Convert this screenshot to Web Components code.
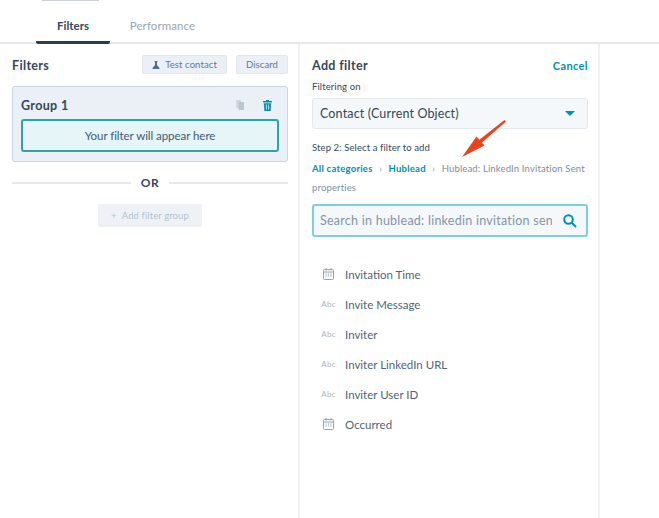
<!DOCTYPE html>
<html>
<head>
<meta charset="utf-8">
<style>
  html, body { margin: 0; height: 100%; background: #fff; }
  body { font-family: Lato, "Open Sans", sans-serif; color: #33475b; overflow: hidden; }
</style>
</head>
<body>
<filter-page></filter-page>
<script>
class TabBar extends HTMLElement {
  constructor() {
    super();
    this.attachShadow({ mode: 'open' });
    this.shadowRoot.innerHTML = `
      <style>
        :host { display: block; height: 44px; box-sizing: border-box; border-bottom: 2px solid #e5e9ee; padding-left: 36px; }
        #top { position: absolute; left: 42px; top: 0; width: 57px; height: 1px; background: #c9d1db; }
        #tabs { display: flex; height: 44px; }
        .tab { display: flex; align-items: center; justify-content: center; height: 44px; box-sizing: border-box; font-size: 11.5px; padding-top: 9px; }
        .on { width: 74px; font-weight: 700; color: #33475b; border-bottom: 3px solid #2d3e50; border-radius: 0 0 2px 2px; }
        .off { width: 105px; color: #99a6b5; letter-spacing: .1px; padding-bottom: 3px; }
      </style>
      <div id="top"></div>
      <div id="tabs"><div class="tab on">Filters</div><div class="tab off">Performance</div></div>
    `;
  }
}

class FlatButton extends HTMLElement {
  constructor() {
    super();
    this.attachShadow({ mode: 'open' });
    this.shadowRoot.innerHTML = `
      <style>
        :host { display: inline-flex; align-items: center; justify-content: center; gap: 5px; height: 19px; box-sizing: border-box; padding: 0 9px; background: #eaf0f6; border: 1px solid #e1e7ee; border-radius: 2px; font-size: 9.5px; color: #5e7a96; letter-spacing: .1px; }
        :host([disabled]) { color: #b6c2cf; height: 23px; padding: 0 12px; background: #eef2f6; border-color: #eef2f6; }
      </style>
      <slot name="icon"></slot><slot></slot>
    `;
  }
}

class FilterGroup extends HTMLElement {
  constructor() {
    super();
    this.attachShadow({ mode: 'open' });
    this.shadowRoot.innerHTML = `
      <style>
        :host { display: block; background: #eaf0f6; border: 1px solid #cbd6e2; border-radius: 3px; padding: 6px 8px 9px; box-sizing: border-box; height: 76px; }
        #head { display: flex; align-items: center; height: 24px; margin-bottom: 2px; }
        h3 { margin: 0; flex: 1; font-size: 12.5px; font-weight: 700; letter-spacing: .35px; color: #33475b; }
        svg { display: block; }
        #copy { margin-right: 19px; }
        #trash { margin-right: 7px; }
        #drop { height: 33px; box-sizing: border-box; border: 2px solid #2ba5a5; border-radius: 3px; background: #e5f5f8; display: flex; align-items: center; justify-content: center; font-size: 11.5px; color: #425b76; letter-spacing: -.05px; }
      </style>
      <div id="head">
        <h3><slot name="title"></slot></h3>
        <svg id="copy" width="8" height="10" viewBox="0 0 8 10"><path d="M0 0h5v8H0z" fill="#d0d7df"/><path d="M2.500 2H8v8H2.500z" fill="#bcc6d0"/></svg>
        <svg id="trash" width="9" height="11" viewBox="0 0 9 11"><path d="M3 0h3v1h3v1.400H0V1h3zM.8 3.200h7.400l-.6 7.800H1.400zM2.900 4.500v5h.8v-5zm2.400 0v5h.8v-5z" fill="#0091ae" fill-rule="evenodd"/></svg>
      </div>
      <div id="drop"><slot></slot></div>
    `;
  }
}

class OrDivider extends HTMLElement {
  constructor() {
    super();
    this.attachShadow({ mode: 'open' });
    this.shadowRoot.innerHTML = `
      <style>
        :host { display: flex; align-items: center; gap: 10px; font-size: 12px; font-weight: 700; color: #33475b; letter-spacing: .5px; }
        i { flex: 1; height: 2px; background: #e5e9ee; }
      </style>
      <i></i><span>OR</span><i></i>
    `;
  }
}

class FilterList extends HTMLElement {
  constructor() {
    super();
    this.attachShadow({ mode: 'open' });
    this.shadowRoot.innerHTML = `
      <style>
        :host { display: flex; flex-direction: column; }
        .row { display: flex; align-items: center; height: 30px; font-size: 11.5px; color: #4f6478; }
        .ic { width: 33px; flex: none; display: flex; justify-content: center; box-sizing: border-box; }
        .abc { font-size: 8px; color: #a8b4c1; letter-spacing: .3px; }
      </style>
      <div id="list"></div>
    `;
    const cal = `<svg width="11" height="12" viewBox="0 0 11 12" fill="none" stroke="#93a3b5"><rect x=".5" y="1.500" width="10" height="10" rx="1"/><path d="M.5 4h10M3 0v2.500M8 0v2.500"/><path d="M2.500 6h6M2.500 8h6" stroke-dasharray="1.200 1.200"/></svg>`;
    const items = [
      ['d', 'Invitation Time'], ['a', 'Invite Message'], ['a', 'Inviter'],
      ['a', 'Inviter LinkedIn URL'], ['a', 'Inviter User ID'], ['d', 'Occurred']
    ];
    const list = this.shadowRoot.querySelector('#list');
    items.map(item => {
      const row = document.createElement('div');
      row.className = 'row';
      row.innerHTML = `<span class="ic">${item[0] === 'd' ? cal : '<span class="abc">Abc</span>'}</span><span>${item[1]}</span>`;
      list.appendChild(row);
    });
  }
}

class FilterPage extends HTMLElement {
  constructor() {
    super();
    this.attachShadow({ mode: 'open' });
    this.shadowRoot.innerHTML = `
      <style>
        :host { display: block; width: 659px; height: 518px; position: relative; overflow: hidden; }
        #cols { display: flex; height: 474px; }
        #left { width: 300px; box-sizing: border-box; padding: 11px 10px 0 12px; border-right: 2px solid #eef1f5; flex: none; }
        #right { width: 300px; box-sizing: border-box; padding: 11px 10px 0 12px; border-right: 2px solid #eef1f5; flex: none; }
        .bar { display: flex; align-items: center; height: 19px; }
        h2 { margin: 0; flex: 1; padding-top: 1px; font-size: 12.5px; font-weight: 700; color: #33475b; letter-spacing: .35px; }
        .bar flat-button + flat-button { margin-left: 9px; }
        filter-group { margin-top: 12px; }
        or-divider { margin-top: 13px; }
        .center { display: flex; justify-content: center; margin-top: 14px; }
        #cancel { font-size: 11px; font-weight: 700; color: #0091ae; letter-spacing: .4px; padding-top: 1px; }
        .label { font-size: 9.5px; color: #33475b; letter-spacing: .1px; }
        #select { display: flex; align-items: center; height: 31px; box-sizing: border-box; margin-top: 6px; padding: 0 12px 0 7px; background: #f5f8fa; border: 1px solid #e4e9ef; border-radius: 3px; font-size: 12.5px; color: #33475b; letter-spacing: .15px; }
        #select span { flex: 1; }
        #caret { width: 0; height: 0; border: 5px solid transparent; border-top: 5px solid #0091ae; border-bottom: 0; }
        #crumbs { font-size: 9.5px; line-height: 19px; color: #7c8ea3; margin-top: 6px; letter-spacing: .15px; }
        #crumbs div { white-space: nowrap; }
        #crumbs b { color: #0091ae; font-weight: 700; letter-spacing: .25px; }
        #crumbs i { font-style: normal; margin: 0 6.5px; color: #8a9bb0; }
        #search { display: flex; align-items: center; height: 33px; box-sizing: border-box; margin-top: 7px; padding: 0 9px 0 6px; background: #f5f8fa; border: 2px solid #7fd0dc; border-radius: 3px; font-size: 12.5px; color: #8196ab; letter-spacing: .25px; }
        #search span { flex: 1; overflow: hidden; white-space: nowrap; }
        #search svg { margin-left: 11px; flex: none; }
        filter-list { margin-top: 22px; }
        #arrow { position: absolute; left: 460px; top: 118px; }
      </style>
      <tab-bar></tab-bar>
      <div id="cols">
        <section id="left">
          <div class="bar">
            <h2>Filters</h2>
            <flat-button><svg slot="icon" width="8" height="8" viewBox="0 0 8 8"><path d="M2.500 0h3v1H5v3l2.500 3v1H.5V7L3 4V1h-.5z" fill="#506e91"/></svg>Test contact</flat-button>
            <flat-button>Discard</flat-button>
          </div>
          <filter-group><span slot="title">Group 1</span>Your filter will appear here</filter-group>
          <or-divider></or-divider>
          <div class="center"><flat-button disabled><span slot="icon">+</span>Add filter group</flat-button></div>
        </section>
        <section id="right">
          <div class="bar"><h2>Add filter</h2><span id="cancel">Cancel</span></div>
          <div class="label" style="margin-top:7px">Filtering on</div>
          <div id="select"><span>Contact (Current Object)</span><div id="caret"></div></div>
          <div class="label" style="margin-top:13px">Step 2: Select a filter to add</div>
          <div id="crumbs">
            <div><b>All categories</b><i>›</i><b>Hublead</b><i>›</i><span>Hublead: LinkedIn Invitation Sent</span></div>
            <div>properties</div>
          </div>
          <div id="search"><span>Search in hublead: linkedin invitation sent</span><svg width="14" height="14" viewBox="0 0 14 14" fill="none" stroke="#0091ae" stroke-width="2"><circle cx="5.500" cy="5.500" r="4.300"/><path d="M8.800 8.800L13 13"/></svg></div>
          <filter-list></filter-list>
        </section>
      </div>
      <svg id="arrow" width="48" height="42" viewBox="0 0 48 42"><path d="M44.500 2L19 22l2.500 3L46 3.500z" fill="#e9431d"/><path d="M2 39L16.500 18.500L24.500 27.500z" fill="#e9431d"/></svg>
    `;
  }
}

customElements.define('tab-bar', TabBar);
customElements.define('flat-button', FlatButton);
customElements.define('filter-group', FilterGroup);
customElements.define('or-divider', OrDivider);
customElements.define('filter-list', FilterList);
customElements.define('filter-page', FilterPage);
</script>
</body>
</html>
